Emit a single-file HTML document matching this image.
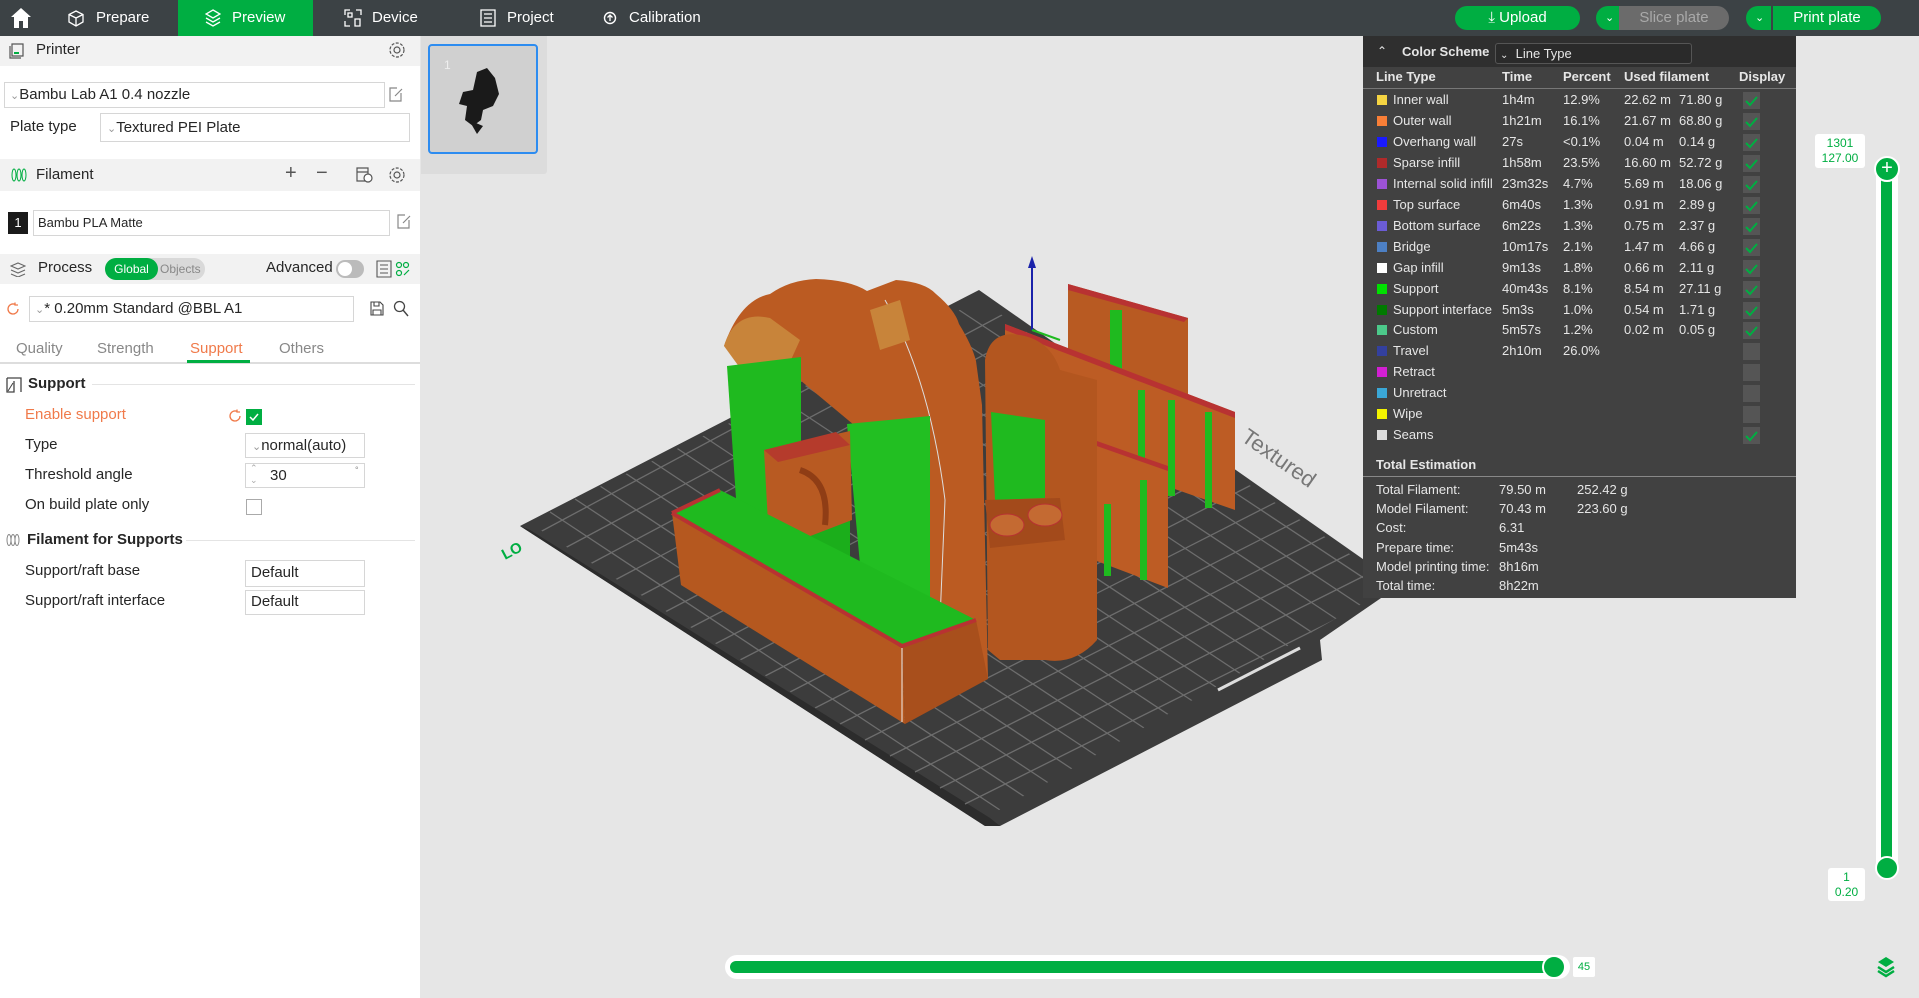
<!DOCTYPE html>
<html><head><meta charset="utf-8"><style>
*{margin:0;padding:0;box-sizing:border-box}
body{width:1919px;height:998px;overflow:hidden;background:#e6e6e6;font-family:"Liberation Sans",sans-serif;position:relative;font-size:15px;color:#262626}
.a{position:absolute}
.top{left:0;top:0;width:1919px;height:36px;background:#3c4245}
.tt{color:#fff;font-size:15px;top:9px}
.hdr{background:#f2f2f2;left:0;width:420px}
.box{border:1px solid #d6d6d6;background:#fff}
.lg{color:#e6e6e6;font-size:13px}
.sw{width:10px;height:10px}
.cb{width:17px;height:17px;background:#555}
.btn{background:#00ae42;color:#fff;font-size:15px;text-align:center;line-height:24px;border-radius:12px}
</style></head><body>
<div class="a top"></div>
<svg class="a" style="left:10px;top:6px" width="22" height="24" viewBox="0 0 22 24"><path d="M11 2 L21 11 H18 V22 H13 V15 H9 V22 H4 V11 H1 Z" fill="#fff"/></svg>
<svg class="a" style="left:68px;top:10px" width="16" height="17" viewBox="0 0 16 17"><path d="M8 1 L15 4.5 V12 L8 16 L1 12 V4.5 Z M1 4.5 L8 8 L15 4.5 M8 8V16" fill="none" stroke="#fff" stroke-width="1.3"/></svg>
<div class="a tt" style="left:96px">Prepare</div>
<div class="a" style="left:178px;top:0;width:135px;height:36px;background:#00ae42"></div>
<svg class="a" style="left:205px;top:9px" width="16" height="18" viewBox="0 0 16 18"><path d="M8 1 L15 5 L8 9 L1 5 Z M1 9 L8 13 L15 9 M1 13 L8 17 L15 13" fill="none" stroke="#fff" stroke-width="1.3"/></svg>
<div class="a tt" style="left:232px">Preview</div>
<svg class="a" style="left:344px;top:9px" width="18" height="18" viewBox="0 0 18 18"><path d="M1 6V1H6 M12 1H17V6 M1 12V17H6 M4 4H8V8H4Z M11 10H16V17H11Z" fill="none" stroke="#fff" stroke-width="1.3"/></svg>
<div class="a tt" style="left:372px">Device</div>
<svg class="a" style="left:480px;top:9px" width="16" height="18" viewBox="0 0 16 18"><path d="M1 1H15V17H1Z M4 5H12 M4 9H12 M4 13H12" fill="none" stroke="#fff" stroke-width="1.3"/></svg>
<div class="a tt" style="left:507px">Project</div>
<svg class="a" style="left:603px;top:11px" width="14" height="14" viewBox="0 0 14 14"><circle cx="7" cy="7" r="5.5" fill="none" stroke="#fff" stroke-width="1.4"/><path d="M7 4V10 M4.5 6.5L7 4L9.5 6.5" fill="none" stroke="#fff" stroke-width="1.3"/></svg>
<div class="a tt" style="left:629px">Calibration</div>
<div class="a btn" style="left:1455px;top:6px;width:125px">&#x2913; Upload</div>
<div class="a btn" style="left:1596px;top:6px;width:40px;border-radius:12px 0 0 12px;text-align:left;padding-left:9px;font-size:11px">&#x2304;</div>
<div class="a btn" style="left:1619px;top:6px;width:110px;background:#6b6b6b;color:#a9a9a9;border-radius:0 12px 12px 0">Slice plate</div>
<div class="a btn" style="left:1746px;top:6px;width:40px;border-radius:12px 0 0 12px;text-align:left;padding-left:9px;font-size:11px">&#x2304;</div>
<div class="a btn" style="left:1771px;top:6px;width:110px;border-radius:0 12px 12px 0;border-left:2px solid #3c4245">Print plate</div>

<div class="a" style="left:0;top:36px;width:420px;height:962px;background:#fff"></div>
<div class="a hdr" style="top:36px;height:30px"></div>
<svg class="a" style="left:9px;top:43px" width="16" height="16" viewBox="0 0 16 16"><path d="M3 1H14V13H3Z M1 3V15H12" fill="none" stroke="#555" stroke-width="1.2"/><path d="M5 10H10" stroke="#00ae42" stroke-width="2"/></svg>
<div class="a" style="left:36px;top:41px">Printer</div>
<svg class="a" style="left:388px;top:41px" width="18" height="18" viewBox="0 0 18 18"><circle cx="9" cy="9" r="3" fill="none" stroke="#555" stroke-width="1.2"/><circle cx="9" cy="9" r="7" fill="none" stroke="#555" stroke-width="1.2" stroke-dasharray="3 1.5"/></svg>
<div class="a box" style="left:4px;top:82px;width:381px;height:26px"></div>
<div class="a" style="left:10px;top:86px;font-size:15px"><span style="color:#999;font-size:11px">&#x2304;</span>Bambu Lab A1 0.4 nozzle</div>
<svg class="a" style="left:389px;top:86px" width="14" height="16" viewBox="0 0 14 16"><path d="M12 7V15H1V2H8 M6 10L13 3" fill="none" stroke="#888" stroke-width="1.2"/></svg>
<div class="a" style="left:10px;top:118px">Plate type</div>
<div class="a box" style="left:100px;top:113px;width:310px;height:29px"></div>
<div class="a" style="left:107px;top:119px"><span style="color:#999;font-size:11px">&#x2304;</span>Textured PEI Plate</div>

<div class="a hdr" style="top:159px;height:32px"></div>
<svg class="a" style="left:11px;top:167px" width="16" height="16" viewBox="0 0 16 16"><g fill="none" stroke="#00ae42" stroke-width="1"><ellipse cx="3" cy="8" rx="2" ry="6"/><ellipse cx="8" cy="8" rx="2" ry="6"/><ellipse cx="13" cy="8" rx="2" ry="6"/></g></svg>
<div class="a" style="left:36px;top:166px">Filament</div>
<div class="a" style="left:285px;top:162px;font-size:20px;color:#555">+</div>
<div class="a" style="left:316px;top:162px;font-size:20px;color:#555">&#x2212;</div>
<svg class="a" style="left:355px;top:165px" width="18" height="18" viewBox="0 0 18 18"><path d="M2 3H13V16H2Z M2 7H13" fill="none" stroke="#555" stroke-width="1.2"/><circle cx="13" cy="13" r="4" fill="#fff" stroke="#555" stroke-width="1.2"/></svg>
<svg class="a" style="left:388px;top:166px" width="18" height="18" viewBox="0 0 18 18"><circle cx="9" cy="9" r="3" fill="none" stroke="#555" stroke-width="1.2"/><circle cx="9" cy="9" r="7" fill="none" stroke="#555" stroke-width="1.2" stroke-dasharray="3 1.5"/></svg>
<div class="a" style="left:8px;top:212px;width:20px;height:22px;background:#1a1a1a;color:#fff;font-size:13px;text-align:center;line-height:22px">1</div>
<div class="a box" style="left:33px;top:210px;width:357px;height:26px"></div>
<div class="a" style="left:38px;top:215px;font-size:13px">Bambu PLA Matte</div>
<svg class="a" style="left:397px;top:213px" width="14" height="16" viewBox="0 0 14 16"><path d="M12 7V15H1V2H8 M6 10L13 3" fill="none" stroke="#888" stroke-width="1.2"/></svg>

<div class="a hdr" style="top:254px;height:30px"></div>
<svg class="a" style="left:10px;top:261px" width="16" height="16" viewBox="0 0 16 16"><path d="M1 5L8 2L15 5L8 8Z M1 9L8 12L15 9 M1 13L8 16L15 13" fill="none" stroke="#666" stroke-width="1.1"/></svg>
<div class="a" style="left:38px;top:259px">Process</div>
<div class="a" style="left:105px;top:258px;width:100px;height:22px;background:#d9d9d9;border-radius:11px"></div>
<div class="a" style="left:105px;top:258px;width:53px;height:22px;background:#00ae42;border-radius:11px;color:#fff;font-size:12px;text-align:center;line-height:22px">Global</div>
<div class="a" style="left:160px;top:262px;font-size:12px;color:#888">Objects</div>
<div class="a" style="left:266px;top:259px">Advanced</div>
<div class="a" style="left:336px;top:260px;width:28px;height:18px;background:#bbb;border-radius:9px"></div>
<div class="a" style="left:338px;top:262px;width:14px;height:14px;background:#fff;border-radius:7px"></div>
<svg class="a" style="left:376px;top:260px" width="36" height="18" viewBox="0 0 36 18"><path d="M1 1H15V17H1Z M4 5H12 M4 9H12 M4 13H12" fill="none" stroke="#555" stroke-width="1.1"/><g fill="none" stroke="#00ae42" stroke-width="1.2"><circle cx="23" cy="5" r="2.5"/><circle cx="30" cy="5" r="2.5"/><circle cx="23" cy="13" r="2.5"/><path d="M28 15L33 10"/></g></svg>
<svg class="a" style="left:6px;top:302px" width="14" height="14" viewBox="0 0 14 14"><path d="M12 7A5 5 0 1 1 9 2.4 M9 0.5V3H12" fill="none" stroke="#f07a4a" stroke-width="1.3"/></svg>
<div class="a box" style="left:29px;top:296px;width:325px;height:26px"></div>
<div class="a" style="left:35px;top:300px"><span style="color:#999;font-size:11px">&#x2304;</span>* 0.20mm Standard @BBL A1</div>
<svg class="a" style="left:370px;top:301px" width="14" height="15" viewBox="0 0 14 15"><path d="M1 1H10L13 4V14H1Z M4 1V5H9V1 M3 9H11V14H3Z" fill="none" stroke="#444" stroke-width="1.1"/></svg>
<svg class="a" style="left:393px;top:300px" width="16" height="17" viewBox="0 0 16 17"><circle cx="6.5" cy="6.5" r="5" fill="none" stroke="#444" stroke-width="1.3"/><path d="M10 10L15 16" stroke="#444" stroke-width="1.4"/></svg>
<div class="a" style="left:16px;top:340px;color:#888">Quality</div>
<div class="a" style="left:97px;top:340px;color:#888">Strength</div>
<div class="a" style="left:190px;top:340px;color:#f07a4a">Support</div>
<div class="a" style="left:279px;top:340px;color:#888">Others</div>
<div class="a" style="left:0;top:362px;width:420px;height:2px;background:#ddd"></div>
<div class="a" style="left:187px;top:360px;width:63px;height:3px;background:#00ae42"></div>
<svg class="a" style="left:6px;top:377px" width="16" height="16" viewBox="0 0 16 16"><path d="M1 1H15V15 M1 1V15H8V4" fill="none" stroke="#444" stroke-width="1.3"/><path d="M2 14L7 6" stroke="#444" stroke-width="1"/></svg>
<div class="a" style="left:28px;top:375px;font-weight:bold">Support</div>
<div class="a" style="left:92px;top:384px;width:323px;height:1px;background:#e4e4e4"></div>
<div class="a" style="left:25px;top:406px;color:#f07a4a">Enable support</div>
<svg class="a" style="left:228px;top:409px" width="14" height="14" viewBox="0 0 14 14"><path d="M12 7A5 5 0 1 1 9 2.4 M9 0.5V3H12" fill="none" stroke="#f07a4a" stroke-width="1.3"/></svg>
<div class="a" style="left:246px;top:409px;width:16px;height:16px;background:#00ae42"></div>
<svg class="a" style="left:246px;top:409px" width="16" height="16"><path d="M4 8L7 11L12 5" fill="none" stroke="#fff" stroke-width="1.5"/></svg>
<div class="a" style="left:25px;top:436px">Type</div>
<div class="a box" style="left:245px;top:433px;width:120px;height:25px"></div>
<div class="a" style="left:252px;top:437px"><span style="color:#999;font-size:11px">&#x2304;</span>normal(auto)</div>
<div class="a" style="left:25px;top:466px">Threshold angle</div>
<div class="a box" style="left:245px;top:463px;width:120px;height:25px"></div>
<div class="a" style="left:250px;top:462px;color:#aaa;font-size:9px;line-height:12px">&#x2303;<br>&#x2304;</div>
<div class="a" style="left:270px;top:467px">30</div>
<div class="a" style="left:355px;top:465px;font-size:9px;color:#888">°</div>
<div class="a" style="left:25px;top:496px">On build plate only</div>
<div class="a" style="left:246px;top:499px;width:16px;height:16px;border:1px solid #aaa"></div>
<svg class="a" style="left:6px;top:533px" width="14" height="14" viewBox="0 0 14 14"><g fill="none" stroke="#888" stroke-width="1"><ellipse cx="3" cy="7" rx="2" ry="5.5"/><ellipse cx="7" cy="7" rx="2" ry="5.5"/><ellipse cx="11" cy="7" rx="2" ry="5.5"/></g></svg>
<div class="a" style="left:27px;top:531px;font-weight:bold">Filament for Supports</div>
<div class="a" style="left:186px;top:540px;width:229px;height:1px;background:#e4e4e4"></div>
<div class="a" style="left:25px;top:562px">Support/raft base</div>
<div class="a box" style="left:245px;top:560px;width:120px;height:27px"></div>
<div class="a" style="left:251px;top:564px">Default</div>
<div class="a" style="left:25px;top:592px">Support/raft interface</div>
<div class="a box" style="left:245px;top:590px;width:120px;height:25px"></div>
<div class="a" style="left:251px;top:593px">Default</div>

<div class="a" style="left:421px;top:36px;width:126px;height:138px;background:#dcdcdc;border-radius:0 0 3px 0"></div>
<div class="a" style="left:428px;top:44px;width:110px;height:110px;border:2px solid #2d8cf0;border-radius:4px;background:#d0d0d0"></div>
<div class="a" style="left:444px;top:58px;color:#eee;font-size:12px">1</div>
<svg class="a" style="left:455px;top:64px" width="60" height="76" viewBox="0 0 60 76"><path d="M22 8L32 4L40 14L44 30L38 42L28 46L26 56L18 62L10 56L12 42L4 40L8 28L18 26Z" fill="#1a1a1a"/><path d="M14 56L22 70L28 62" fill="#1a1a1a"/></svg>

<svg class="a" style="left:0;top:0" width="1919" height="998" viewBox="0 0 1919 998">
<defs><clipPath id="pc"><polygon points="528,522 980,300 1395,585 985,818"/></clipPath></defs>
<polygon points="520,526 979,290 1400,585 1320,640 1322,660 1000,826 985,826" fill="#3c3c3c"/>
<polygon points="520,526 985,826 1000,826 990,818 530,530" fill="#2c2c2c"/>
<g clip-path="url(#pc)" stroke="#6d6d6d" stroke-width="1.3">
<path d="M540,532L992,290 M565,548L1017,307 M590,564L1042,324 M615,580L1067,341 M640,596L1092,358 M665,612L1117,375 M690,628L1142,392 M715,644L1167,409 M740,660L1192,426 M765,676L1217,443 M790,692L1242,460 M815,708L1267,477 M840,724L1292,494 M865,740L1317,511 M890,756L1342,528 M915,772L1367,545 M940,788L1392,562 M965,804L1417,579"/>
<path d="M550,512L1000,810 M575,499L1025,797 M600,486L1050,784 M625,473L1075,771 M650,460L1100,758 M675,447L1125,745 M700,434L1150,732 M725,421L1175,719 M750,408L1200,706 M775,395L1225,693 M800,382L1250,680 M825,369L1275,667 M850,356L1300,654 M875,343L1325,641 M900,330L1350,628 M925,317L1375,615 M950,304L1400,602"/>
</g>
<path d="M1218,690L1300,648" stroke="#ddd" stroke-width="3"/>
<text x="505" y="560" fill="#00ae42" font-size="15" font-weight="bold" transform="rotate(-28 505 560)" font-family="Liberation Sans">LO</text>
<text x="1240" y="440" fill="#777" font-size="22" transform="rotate(35 1240 440)" font-family="Liberation Sans">Textured</text>
<!-- right panels -->
<polygon points="1068,284 1188,318 1188,440 1068,392" fill="#b85a22"/>
<polygon points="1068,284 1188,318 1184,322 1068,290" fill="#b83232"/>
<rect x="1110" y="310" width="12" height="68" fill="#1fba1f"/>
<polygon points="1005,324 1235,412 1235,510 1005,430" fill="#bd5c24"/>
<polygon points="1005,324 1235,412 1235,418 1005,330" fill="#b83232"/>
<rect x="1138" y="390" width="7" height="110" fill="#1fba1f"/>
<rect x="1168" y="400" width="7" height="96" fill="#1fba1f"/>
<rect x="1205" y="412" width="7" height="96" fill="#1fba1f"/>
<polygon points="1094,440 1168,466 1168,588 1094,560" fill="#bd5c24"/>
<polygon points="1094,440 1168,466 1168,471 1094,445" fill="#b83232"/>
<rect x="1104" y="504" width="7" height="72" fill="#1fba1f"/>
<rect x="1140" y="480" width="7" height="100" fill="#1fba1f"/>
<path d="M1032,330V265" stroke="#1a22aa" stroke-width="2"/><polygon points="1028,268 1032,256 1036,268" fill="#1a22aa"/>
<path d="M1032,330L1060,340" stroke="#1fba1f" stroke-width="2"/>
<!-- middle tower -->
<path d="M985,360Q990,330 1020,335Q1050,340 1060,370L1097,380V640Q1075,665 1045,660L1000,660L988,650Z" fill="#b3561f"/>
<polygon points="991,412 1045,420 1045,498 995,500" fill="#1fba1f"/>
<polygon points="985,500 1060,498 1065,540 990,548" fill="#a34a1b"/>
<ellipse cx="1007" cy="525" rx="17" ry="11" fill="#c46a32" stroke="#b83232"/>
<ellipse cx="1045" cy="515" rx="17" ry="11" fill="#c46a32" stroke="#b83232"/>
<!-- big arc -->
<path d="M724,346Q740,300 770,294Q790,280 816,279Q850,280 867,291L896,280Q925,282 936,294Q955,310 959,324Q972,345 976,361L982,405L988,679L935,660L900,640L860,430L800,380Z" fill="#bb5b22"/>
<path d="M885,300Q930,380 945,500L940,620" stroke="#ddd" stroke-width="1" fill="none"/>
<path d="M724,346Q735,310 770,318L800,340L790,362L740,368Z" fill="#c8843a"/>
<path d="M870,310L900,300L910,340L880,350Z" fill="#c8843a"/>
<!-- green supports -->
<polygon points="727,366 801,357 801,585 741,572" fill="#1fba1f"/>
<polygon points="847,424 930,416 930,640 867,640" fill="#22bf22"/>
<polygon points="770,505 850,500 850,625 775,600" fill="#1bae1b"/>
<!-- small block -->
<polygon points="764,450 850,431 852,520 800,540 768,523" fill="#b85a22"/>
<polygon points="764,450 836,432 850,445 778,462" fill="#b53b2c"/>
<path d="M800,470Q830,480 825,525" stroke="#8f3d15" stroke-width="6" fill="none"/>
<!-- front tray -->
<polygon points="672,513 720,490 976,620 902,646" fill="#1fba1f"/>
<polygon points="672,513 902,646 905,724 681,585" fill="#b5581f"/>
<polygon points="902,646 976,620 988,679 905,724" fill="#a84f1c"/>
<path d="M672,513L902,646L976,620 M672,513L720,490" stroke="#b83232" stroke-width="4" fill="none"/>
<path d="M902,648V722" stroke="#eee" stroke-width="1"/>
</svg>

<div class="a" style="left:1363px;top:36px;width:433px;height:562px;background:#414141"></div>
<div class="a" style="left:1363px;top:36px;width:433px;height:31px;background:#2f2f2f"></div>
<div class="a lg" style="left:1377px;top:44px;font-size:12px">&#x2303;</div>
<div class="a lg" style="left:1402px;top:44px;font-weight:bold">Color Scheme</div>
<div class="a" style="left:1495px;top:43px;width:197px;height:21px;border:1px solid #555;border-radius:3px;background:#2a2a2a"></div>
<div class="a lg" style="left:1500px;top:46px"><span style="font-size:10px">&#x2304;</span>&nbsp; Line Type</div>
<div class="a lg" style="left:1376px;top:69px;font-weight:bold">Line Type</div>
<div class="a lg" style="left:1502px;top:69px;font-weight:bold">Time</div>
<div class="a lg" style="left:1563px;top:69px;font-weight:bold">Percent</div>
<div class="a lg" style="left:1624px;top:69px;font-weight:bold">Used filament</div>
<div class="a lg" style="left:1739px;top:69px;font-weight:bold">Display</div>
<div class="a" style="left:1363px;top:88px;width:433px;height:1px;background:#777"></div>
<div id="rows"></div>
<div class="a lg" style="left:1376px;top:457px;font-weight:bold">Total Estimation</div>
<div class="a" style="left:1363px;top:476px;width:433px;height:1px;background:#888"></div>
<div class="a lg" style="left:1376px;top:480px;line-height:19.2px">Total Filament:<br>Model Filament:<br>Cost:<br>Prepare time:<br>Model printing time:<br>Total time:</div>
<div class="a lg" style="left:1499px;top:480px;line-height:19.2px">79.50 m<br>70.43 m<br>6.31<br>5m43s<br>8h16m<br>8h22m</div>
<div class="a lg" style="left:1577px;top:480px;line-height:19.2px">252.42 g<br>223.60 g</div>

<div class="a" style="left:1876px;top:160px;width:22px;height:716px;background:#fff;border-radius:11px"></div>
<div class="a" style="left:1881px;top:168px;width:11px;height:700px;background:#00ae42"></div>
<div class="a" style="left:1874px;top:156px;width:26px;height:26px;border-radius:13px;background:#00ae42;border:2px solid #fff;color:#fff;text-align:center;line-height:20px;font-size:20px">+</div>
<div class="a" style="left:1875px;top:856px;width:24px;height:24px;border-radius:12px;background:#00ae42;border:2px solid #fff"></div>
<div class="a" style="left:1815px;top:134px;width:50px;height:34px;background:#fff;border-radius:3px;color:#00ae42;font-size:12px;text-align:center;line-height:15px;padding-top:2px">1301<br>127.00</div>
<div class="a" style="left:1828px;top:868px;width:37px;height:33px;background:#fff;border-radius:3px;color:#00ae42;font-size:12px;text-align:center;line-height:15px;padding-top:2px">1<br>0.20</div>
<div class="a" style="left:725px;top:955px;width:845px;height:24px;background:#fff;border-radius:12px"></div>
<div class="a" style="left:730px;top:961px;width:825px;height:12px;background:#00ae42;border-radius:6px"></div>
<div class="a" style="left:1542px;top:955px;width:24px;height:24px;border-radius:12px;background:#00ae42;border:2px solid #fff"></div>
<div class="a" style="left:1573px;top:957px;width:22px;height:20px;background:#fff;border-radius:2px;color:#00ae42;font-size:11px;text-align:center;line-height:20px">45</div>
<svg class="a" style="left:1876px;top:956px" width="20" height="22" viewBox="0 0 20 22"><path d="M10 1L18 6L10 11L2 6Z" fill="#00ae42"/><path d="M2 11L10 16L18 11 M2 15L10 20L18 15" fill="none" stroke="#00ae42" stroke-width="2.5"/></svg>

<script>
var d=[["#f5d442","Inner wall","1h4m","12.9%","22.62 m","71.80 g",1],["#f97f37","Outer wall","1h21m","16.1%","21.67 m","68.80 g",1],["#1a1aff","Overhang wall","27s","<0.1%","0.04 m","0.14 g",1],["#b02a2a","Sparse infill","1h58m","23.5%","16.60 m","52.72 g",1],["#9c52d6","Internal solid infill","23m32s","4.7%","5.69 m","18.06 g",1],["#f03c3c","Top surface","6m40s","1.3%","0.91 m","2.89 g",1],["#6b5cd6","Bottom surface","6m22s","1.3%","0.75 m","2.37 g",1],["#4d80c4","Bridge","10m17s","2.1%","1.47 m","4.66 g",1],["#ffffff","Gap infill","9m13s","1.8%","0.66 m","2.11 g",1],["#00e000","Support","40m43s","8.1%","8.54 m","27.11 g",1],["#007a00","Support interface","5m3s","1.0%","0.54 m","1.71 g",1],["#4cc98a","Custom","5m57s","1.2%","0.02 m","0.05 g",1],["#33409e","Travel","2h10m","26.0%","","",0],["#d21fd2","Retract","","","","",0],["#3aa7d6","Unretract","","","","",0],["#f2f200","Wipe","","","","",0],["#dddddd","Seams","","","","",1]];
var h="";d.forEach(function(r,i){var y=92+i*20.95;
h+='<div class="a sw" style="left:1377px;top:'+(y+3)+'px;background:'+r[0]+'"></div>';
h+='<div class="a lg" style="left:1393px;top:'+y+'px">'+r[1]+'</div>';
h+='<div class="a lg" style="left:1502px;top:'+y+'px">'+r[2]+'</div>';
h+='<div class="a lg" style="left:1563px;top:'+y+'px">'+r[3].replace("<","&lt;")+'</div>';
h+='<div class="a lg" style="left:1624px;top:'+y+'px">'+r[4]+'</div>';
h+='<div class="a lg" style="left:1679px;top:'+y+'px">'+r[5]+'</div>';
h+='<div class="a cb" style="left:1743px;top:'+(y)+'px"></div>';
if(r[6])h+='<svg class="a" style="left:1743px;top:'+(y)+'px" width="17" height="17"><path d="M3 9L7 13L14 5" fill="none" stroke="#00ae42" stroke-width="2"/></svg>';});
document.getElementById("rows").outerHTML=h;
</script>
</body></html>
